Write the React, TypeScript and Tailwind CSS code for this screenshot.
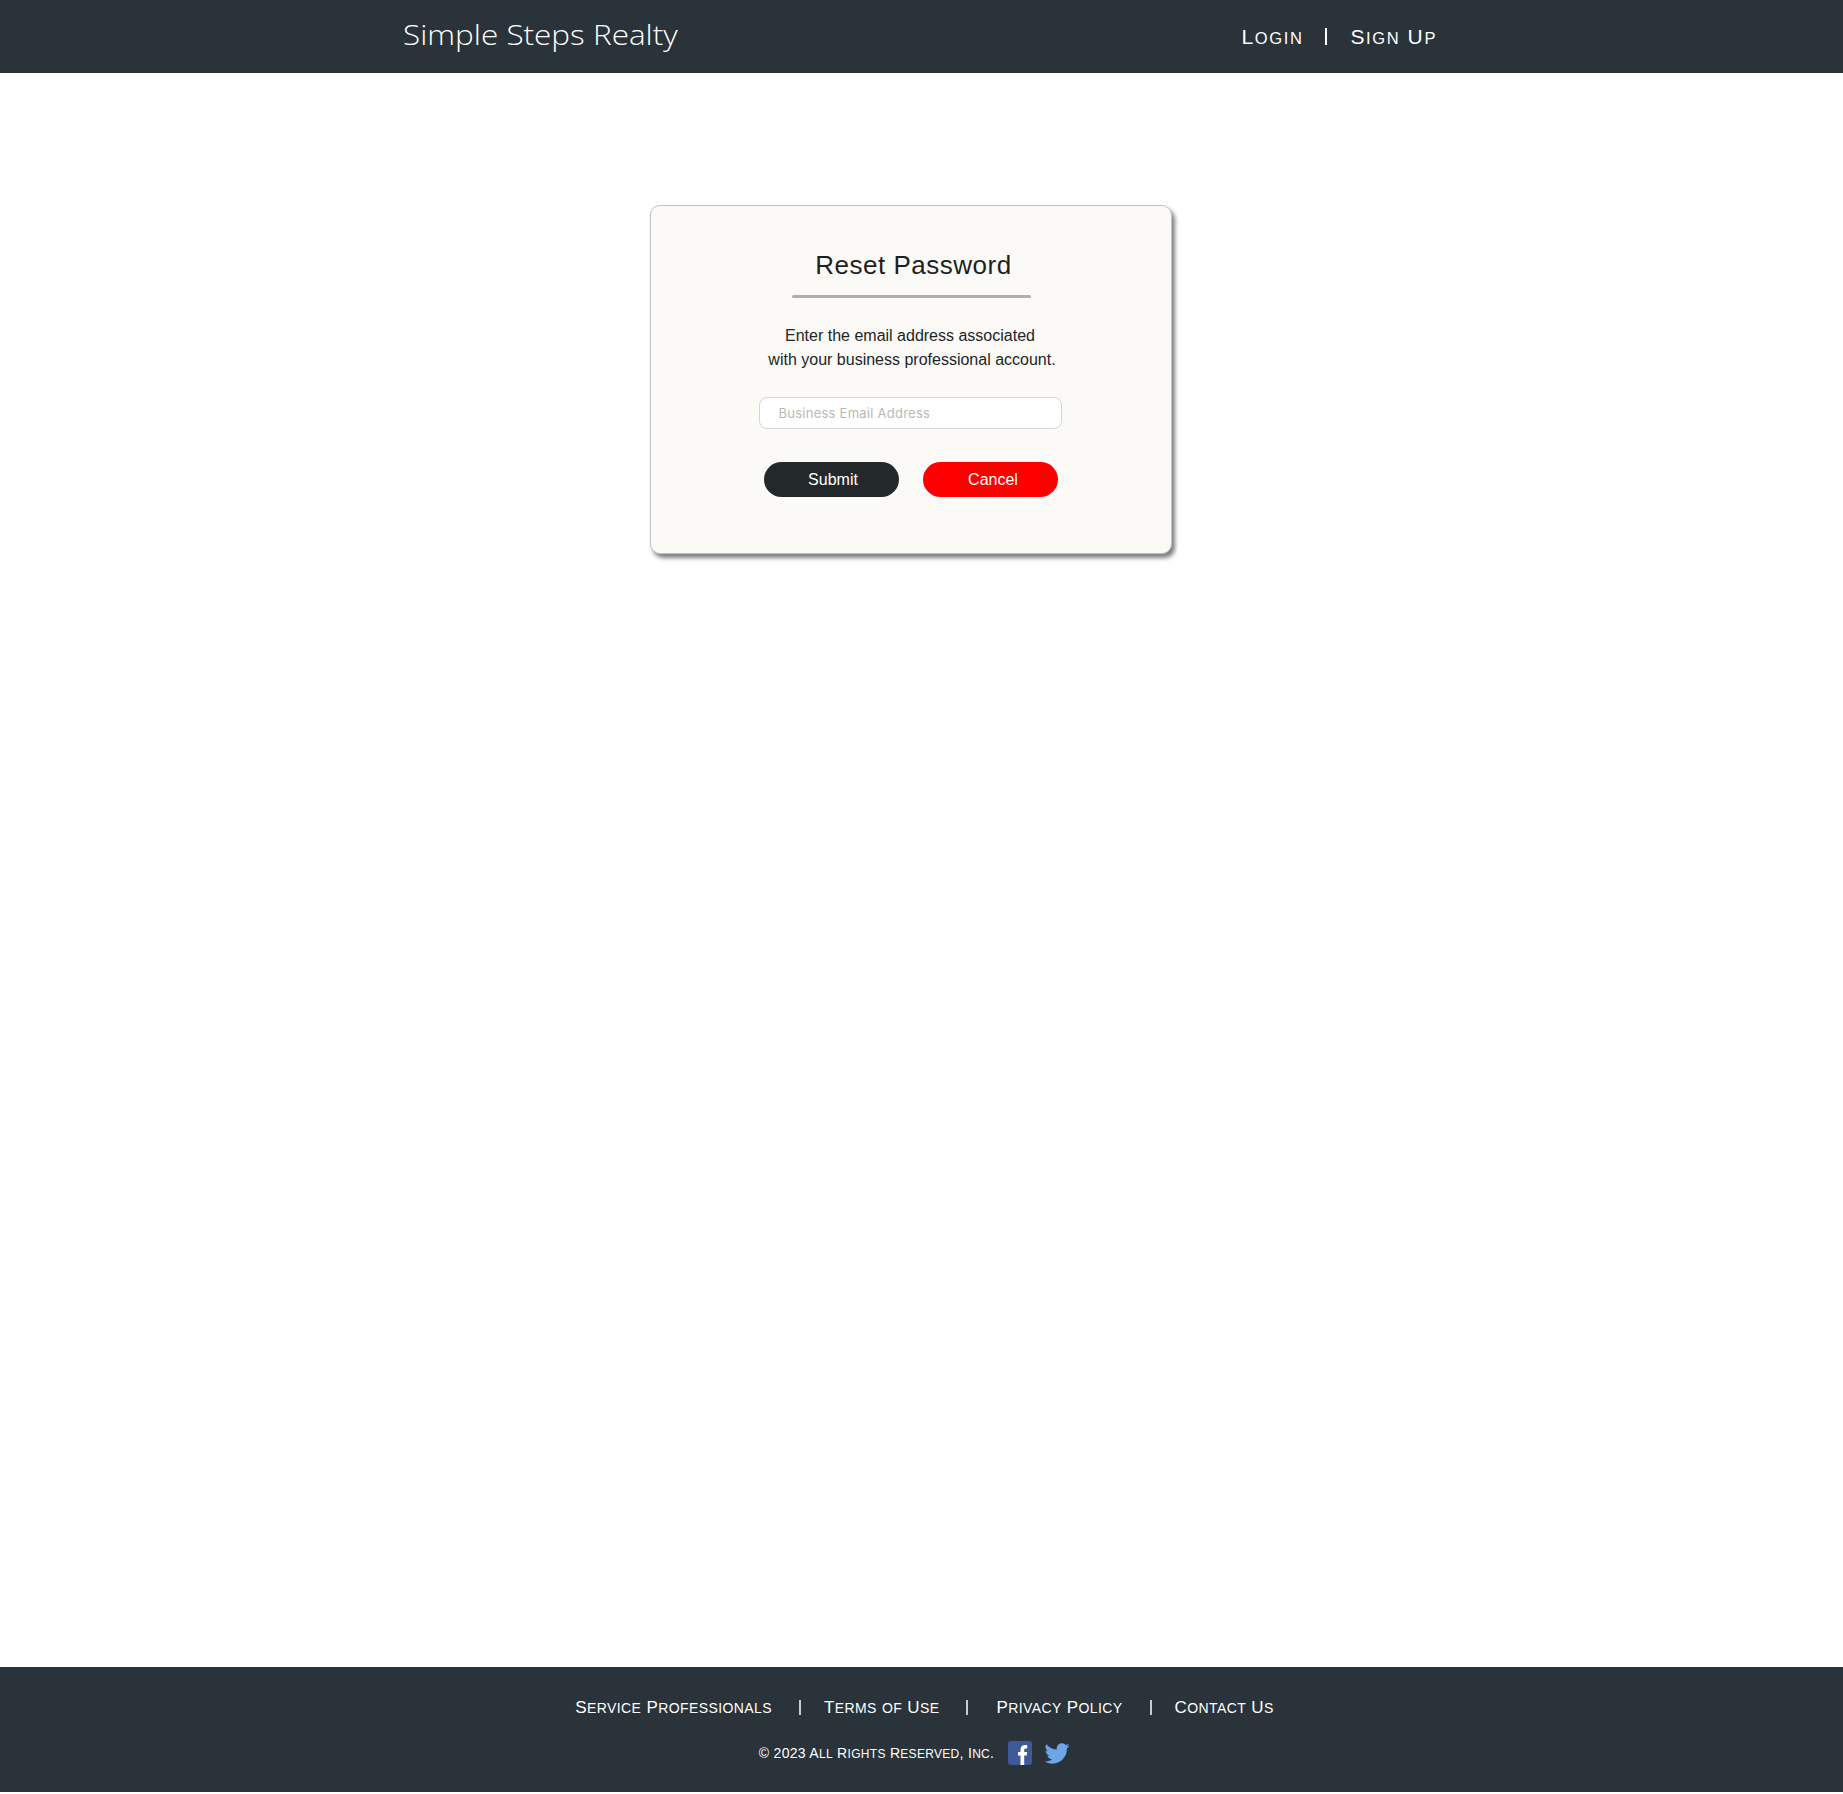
import React from "react";
import { FaTwitter } from "react-icons/fa";

function Caps({ text, className, small }: { text: string; className: string; small: string }) {
  const runs = text.match(/[a-z]+|[^a-z]+/g) ?? [];
  return (
    <a className={`whitespace-nowrap text-white ${className}`}>
      {runs.map((r, i) =>
        /^[a-z]/.test(r) ? (
          <span key={i} className={`uppercase ${small}`}>{r}</span>
        ) : (
          <span key={i}>{r}</span>
        ),
      )}
    </a>
  );
}

function Foot({ text }: { text: string }) {
  return <Caps text={text} className="text-[17px] leading-none tracking-[0.4px]" small="text-[14px]" />;
}

function Top({ text }: { text: string }) {
  return <Caps text={text} className="text-[21px] leading-none tracking-[1.6px]" small="text-[16.5px]" />;
}

function Sep({ className = "" }: { className?: string }) {
  return <span className={`block ${className}`} />;
}

export default function App() {
  return (
    <div className="flex h-[1794px] flex-col bg-white font-['Liberation_Sans',Arial,sans-serif]">
      <header className="flex h-[73px] shrink-0 items-center bg-[#2a323a] pl-[403px] pr-[406px]">
        <div className="mb-[6px] origin-left scale-x-[1.124] font-['Open_Sans',sans-serif] text-[28px] leading-none font-[350] whitespace-nowrap text-white">
          Simple Steps Realty
        </div>
        <nav className="ml-auto flex items-center">
          <Top text="Login" />
          <Sep className="mr-[23px] ml-[22px] h-[17px] w-[2px] bg-white" />
          <Top text="Sign Up" />
        </nav>
      </header>

      <main className="flex-1 pt-[132px] pl-[650px]">
        <section className="flex h-[349px] w-[522px] flex-col items-center rounded-[10px] border border-[#bcc2c6] bg-[#fbfaf6] pt-[43px] shadow-[3px_4px_4px_rgba(0,0,0,0.5)]">
          <h1 className="ml-[5px] text-[26px] leading-[32px] tracking-[0.5px] text-[#1f1f1f]">Reset Password</h1>
          <div className="mt-[14px] h-[3px] w-[239px] rounded-full bg-[#b0aea8]" />
          <p className="mt-[26px] text-center text-[16px] leading-[24px] text-[#212529]">
            <span className="block pr-[2px]">Enter the email address associated</span>
            <span className="block pl-[2px]">with your business professional account.</span>
          </p>
          <input
            placeholder="Business Email Address"
            className="mt-[25px] -ml-[2px] h-[32px] w-[303px] rounded-[8px] border border-[#d6d6d4] bg-white pl-[19px] font-['Inter',sans-serif] text-[13px] tracking-[0.25px] outline-none placeholder:text-[#b9b9b9]"
          />
          <div className="mt-[33px] flex gap-[24px]">
            <button className="h-[35px] w-[135px] rounded-full bg-[#23292b] pl-[3px] text-[16px] text-white">Submit</button>
            <button className="h-[35px] w-[135px] rounded-full bg-[#fe0000] pl-[5px] text-[16px] text-white">Cancel</button>
          </div>
        </section>
      </main>

      <footer className="mb-[2px] flex h-[125px] shrink-0 flex-col items-center bg-[#2a323a] pt-[30px]">
        <nav className="ml-[6px] flex h-[20px] items-center">
          <Foot text="Service Professionals" />
          <Sep className="mr-[23px] ml-[27px] h-[15px] w-[2px] bg-white/75" />
          <Foot text="Terms of Use" />
          <Sep className="mr-[28px] ml-[27px] h-[15px] w-[2px] bg-white/75" />
          <Foot text="Privacy Policy" />
          <Sep className="mr-[23px] ml-[27px] h-[15px] w-[2px] bg-white/75" />
          <Foot text="Contact Us" />
        </nav>
        <div className="mt-[22px] mr-[14px] flex items-center">
          <Caps text="© 2023 All Rights Reserved, Inc." className="text-[14px] leading-none tracking-[0.3px]" small="text-[12px]" />
          <svg viewBox="0 0 24 24" className="ml-[14px] h-[24px] w-[24px]">
            <rect width="24" height="24" rx="3" fill="#3f5a96" />
            <path d="M12.5 24v-9.5H10v-3.6h2.5V8.6C12.5 5.9 14.2 4 17 4h2.2v3.6h-1.4c-1.2 0-1.6.6-1.6 1.6v1.7h3l-.5 3.6h-2.5V24z" fill="#fff" />
          </svg>
          <FaTwitter className="mt-[2px] ml-[12px] h-[25px] w-[26px] text-[#6ea5e6]" />
        </div>
      </footer>
    </div>
  );
}
